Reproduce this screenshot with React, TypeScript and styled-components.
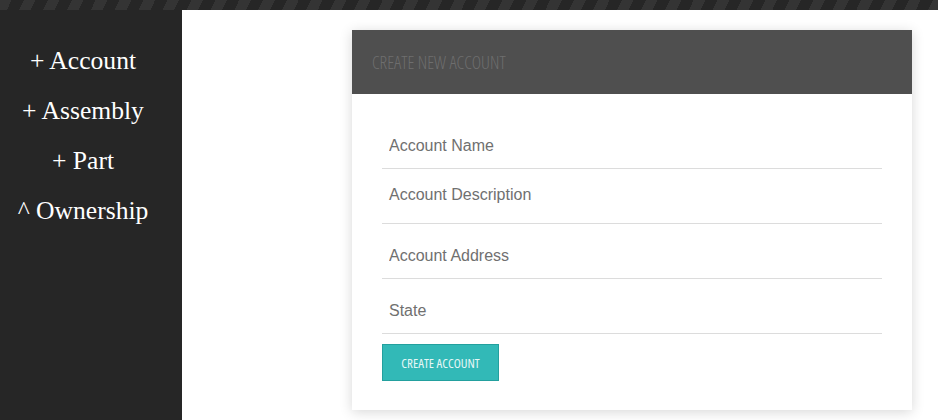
import React from "react";
import styled, { createGlobalStyle } from "styled-components";

const GlobalStyle = createGlobalStyle`
  html, body {
    margin: 0;
    padding: 0;
    background: #ffffff;
    overflow: hidden;
  }
  * { box-sizing: border-box; }
`;

const Page = styled.div`
  width: 938px;
  height: 420px;
  display: flex;
  flex-direction: column;
`;

const TopStrip = styled.div`
  height: 10px;
  flex: none;
  background: repeating-linear-gradient(
    116deg,
    #343434 0px,
    #343434 10.5px,
    #262626 10.5px,
    #262626 21.5px
  );
`;

const Body = styled.div`
  flex: 1;
  display: flex;
  min-height: 0;
`;

const Sidebar = styled.nav`
  width: 182px;
  flex: none;
  background: #262626;
  padding: 26px 16px 0 0;
  display: flex;
  flex-direction: column;
`;

const NavItem = styled.a`
  display: block;
  text-align: center;
  font-family: "Liberation Serif", "Times New Roman", serif;
  font-size: 25.6px;
  line-height: 50px;
  color: #ffffff;
  text-decoration: none;
  white-space: nowrap;
`;

const Main = styled.main`
  flex: 1;
  background: #ffffff;
  padding: 20px 0 0 170px;
`;

const Card = styled.section`
  width: 560px;
  background: #ffffff;
  box-shadow: 0 2px 12px rgba(0, 0, 0, 0.16);
`;

const CardHeader = styled.header`
  height: 64px;
  background: #4f4f4f;
  display: flex;
  align-items: center;
  padding: 0 20px;
`;

const CardTitle = styled.h2`
  margin: 0;
  font-family: "Open Sans", "Liberation Sans", sans-serif;
  font-stretch: 75%;
  font-weight: 300;
  font-size: 17.8px;
  color: #6e6e6e;
  text-transform: uppercase;
`;

const Form = styled.form`
  padding: 30px 30px 29px 30px;
  display: flex;
  flex-direction: column;
  gap: 10px;
`;

const fieldBase = `
  width: 100%;
  border: none;
  border-bottom: 1px solid #dcdcdc;
  background: transparent;
  font-family: "Liberation Sans", Arial, sans-serif;
  font-size: 16px;
  color: #555;
  padding: 0 7px;
  outline: none;
  &::placeholder { color: #707070; opacity: 1; }
`;

const Input = styled.input`
  ${fieldBase}
  height: 45px;
`;

const TextArea = styled.textarea`
  ${fieldBase}
  height: 45px;
  padding-top: 6px;
  resize: none;
  line-height: 20px;
  display: block;
`;

const SubmitButton = styled.button`
  align-self: flex-start;
  width: 117px;
  height: 37px;
  background: #32b9b7;
  border: 1px solid #23a09e;
  border-radius: 0;
  color: #e6f7f6;
  font-family: "Open Sans", "Liberation Sans", sans-serif;
  font-stretch: 75%;
  font-weight: 400;
  font-size: 13px;
  text-transform: uppercase;
  cursor: pointer;
  padding: 0;
`;

const navItems = ["+ Account", "+ Assembly", "+ Part", "^ Ownership"];

export default function App() {
  return (
    <>
      <GlobalStyle />
      <Page>
        <TopStrip />
        <Body>
          <Sidebar>
            {navItems.map((t) => (
              <NavItem key={t}>{t}</NavItem>
            ))}
          </Sidebar>
          <Main>
            <Card>
              <CardHeader>
                <CardTitle>Create New Account</CardTitle>
              </CardHeader>
              <Form onSubmit={(e) => e.preventDefault()}>
                <Input placeholder="Account Name" />
                <TextArea placeholder="Account Description" />
                <Input placeholder="Account Address" />
                <Input placeholder="State" />
                <SubmitButton type="submit">Create Account</SubmitButton>
              </Form>
            </Card>
          </Main>
        </Body>
      </Page>
    </>
  );
}
